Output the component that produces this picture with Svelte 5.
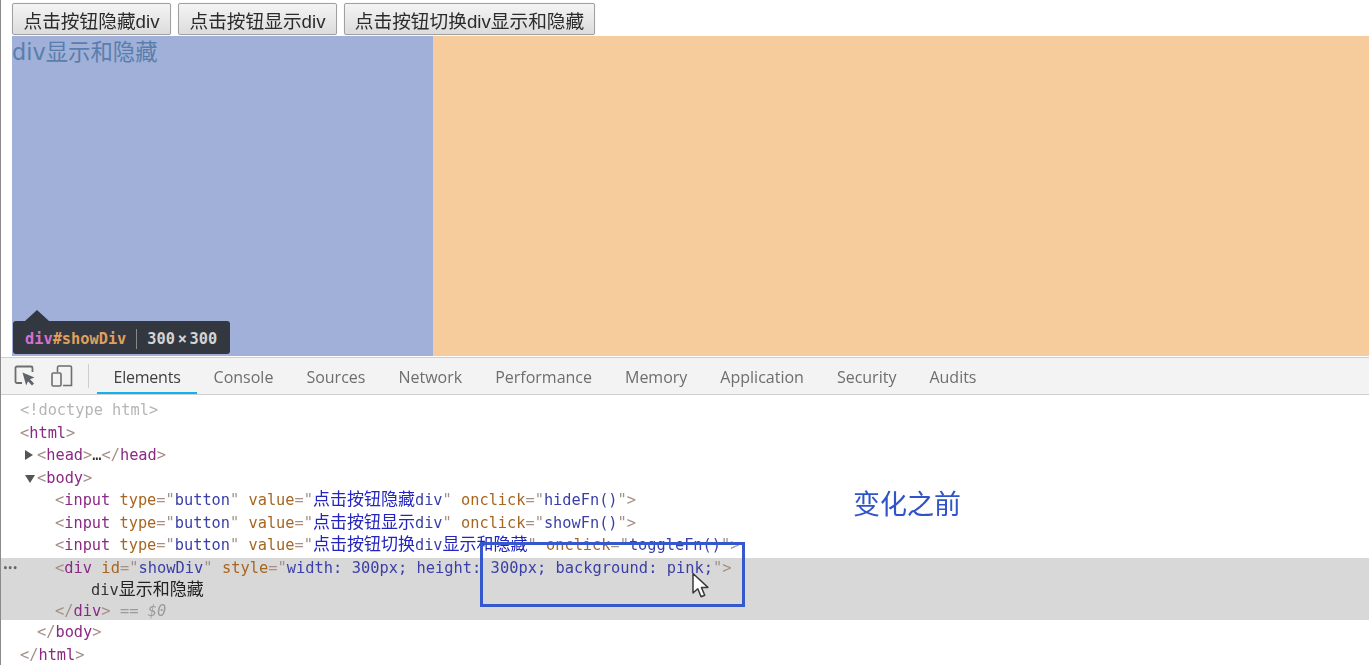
<script>
  const tabs = ['Elements','Console','Sources','Network','Performance','Memory','Application','Security','Audits'];
  const btn = (v, fn) => [
    ['p','<'],['t','input'],['a',' type'],['p','="'],['v','button'],['p','"'],['a',' value'],['p','="'],
    ['c',v[0]],['v',v[1]],['c',v[2]],['p','"'],['a',' onclick'],['p','="'],['v',fn],['p','">']
  ];
  const rows = [
    {i:'i0', seg:[['d','<!doctype html>']]},
    {i:'i0', seg:[['p','<'],['t','html'],['p','>']]},
    {i:'i1', arrow:'right', seg:[['p','<'],['t','head'],['p','>'],['x','…'],['p','</'],['t','head'],['p','>']]},
    {i:'i1', arrow:'down', seg:[['p','<'],['t','body'],['p','>']]},
    {i:'i2', seg:btn(['点击按钮隐藏','div',''],'hideFn()')},
    {i:'i2', seg:btn(['点击按钮显示','div',''],'showFn()')},
    {i:'i2', seg:btn(['点击按钮切换','div','显示和隐藏'],'toggleFn()')},
  ];
  const selected = [
    {i:'i2', dots:true, seg:[['p','<'],['t','div'],['a',' id'],['p','="'],['v','showDiv'],['p','"'],['a',' style'],['p','="'],['v','width: 300px; height: 300px; background: pink;'],['p','">']]},
    {i:'i3', seg:[['x','div'],['k','显示和隐藏']]},
    {i:'i2', seg:[['p','</'],['t','div'],['p','>'],['e',' == $0']]},
  ];
  const tail = [
    {i:'i1', seg:[['p','</'],['t','body'],['p','>']]},
    {i:'i0', seg:[['p','</'],['t','html'],['p','>']]},
  ];
</script>

{#snippet row(r)}
  <div class="row {r.i}">{#if r.dots}<span class="dots">•••</span>{/if}{#if r.arrow}<span class="arrow {r.arrow}"></span>{/if}{#each r.seg as s}<span class={s[0]}>{s[1]}</span>{/each}</div>
{/snippet}

<div class="root">
  <div class="shot">
    <section class="page">
      <div class="buttons">
        <button>点击按钮隐藏div</button>
        <button>点击按钮显示div</button>
        <button>点击按钮切换div显示和隐藏</button>
      </div>
      <div class="stage">
        <div class="box">
          div显示和隐藏
          <div class="tip">
            <span class="tag">div</span><span class="id">#showDiv</span><span class="sep"></span><span class="dim">300 × 300</span>
          </div>
        </div>
        <div class="rest"></div>
      </div>
    </section>

    <section class="tools">
      <svg class="ico first" width="22" height="24" viewBox="0 0 22 24" fill="none">
        <path d="M8 19H3a1.500 1.500 0 0 1-1.500-1.500V4A1.500 1.500 0 0 1 3 2.500h14A1.500 1.500 0 0 1 18.500 4v4" stroke="#6e6e6e" stroke-width="1.800"/>
        <path d="M8.500 8.500l12 5-4.500 1.800 4 4.300-2 2-4-4.300-1.800 4.200z" fill="#5f6368"/>
      </svg>
      <svg class="ico" width="22" height="24" viewBox="0 0 22 24" fill="none" stroke="#6e6e6e" stroke-width="1.600">
        <path d="M6.500 8V3.500a1.500 1.500 0 0 1 1.500-1.500h11a1.500 1.500 0 0 1 1.500 1.500v18H12"/>
        <rect x="1" y="9" width="9" height="13" rx="1.200"/>
      </svg>
      <span class="divider"></span>
      <nav class="tabs">
        {#each tabs as t, n}<span class="tab" class:active={n === 0}>{t}</span>{/each}
      </nav>
    </section>

    <section class="code">
      {#each rows as r}{@render row(r)}{/each}
      <div class="sel">
        {#each selected as r}{@render row(r)}{/each}
      </div>
      {#each tail as r}{@render row(r)}{/each}
    </section>
  </div>

  <div class="note">变化之前</div>
  <div class="frame"></div>
  <svg class="cursor" width="20" height="28" viewBox="0 0 20 28">
    <path d="M2 1.500V21l4.800-4.300 3.300 8 3.600-1.500-3.300-7.800h6.500z" fill="#fff" stroke="#3a3a3a" stroke-width="1.500" stroke-linejoin="round"/>
  </svg>
</div>

<style>
  :global(body) { margin: 0; background: #fff; overflow: hidden; }
  .root { position: relative; width: 1369px; height: 665px; overflow: hidden; background: #fff; }
  .shot { display: flex; flex-direction: column; height: 665px; border-left: 1px solid #8a8a8a; filter: blur(0.6px); box-sizing: border-box; }

  .page { height: 357px; padding-left: 11px; flex: none; box-sizing: border-box; }
  .buttons { display: flex; gap: 7px; height: 36px; padding-top: 3px; box-sizing: border-box; }
  button {
    height: 32px; padding: 0; margin: 0; flex: none;
    font: 18.700px "Liberation Sans", "Noto Sans CJK SC", sans-serif; color: #2b2b2b;
    background: linear-gradient(#f4f4f4, #dcdcdc); border: 1px solid #a0a0a0; border-radius: 2px;
    box-shadow: 0 0 1px #c8c8c8;
    white-space: nowrap;
  }
  .buttons button:first-child { width: 159px; }
  .buttons button:nth-child(2) { width: 159px; }
  .buttons button:nth-child(3) { width: 251px; }
  .stage { display: flex; height: 320px; margin-right: -1px; }
  .box {
    position: relative; width: 421px; background: #a0b0d9; color: #5a7eab;
    font: 22.400px/33px "DejaVu Sans", "Noto Sans CJK SC", sans-serif;
  }
  .rest { flex: 1; background: #f6cc9d; }
  .tip {
    position: absolute; left: 1px; top: 285px; width: 217px; height: 33px;
    display: flex; align-items: center; padding-left: 12px; padding-top: 3px; box-sizing: border-box;
    background: #333740; border-radius: 3px;
    font: 15.300px/30px "DejaVu Sans Mono", monospace; white-space: pre;
  }
  .tip::before {
    content: ""; position: absolute; left: 12px; top: -11px;
    border: 12px solid transparent; border-top: 0; border-bottom: 11px solid #333740;
  }
  .tag { color: #d76fd0; font-weight: bold; }
  .id { color: #e0a05e; font-weight: bold; }
  .sep { width: 1px; height: 20px; background: #888; margin: 0 10px; }
  .dim { color: #d4d4d4; font-weight: bold; word-spacing: -6.500px; }

  .tools {
    height: 38px; flex: none; display: flex; align-items: center; box-sizing: border-box;
    background: #f3f3f3; border-top: 1px solid #d0d0d0; border-bottom: 1px solid #d0d0d0;
  }
  .ico { flex: none; margin-left: 15px; }
  .ico.first { margin-left: 13px; }
  .divider { width: 1px; height: 24px; background: #cfcfcf; margin-left: 15px; }
  .tabs { display: flex; height: 100%; margin-left: 8px; }
  .tab {
    padding: 1px 16.500px 0; height: 36px; box-sizing: border-box;
    font: 16px/36px "Open Sans", sans-serif; color: #6e6e6e; white-space: nowrap;
  }
  .tab.active { color: #3f3f3f; border-bottom: 2px solid #14b0f0; letter-spacing: -0.220px; }

  .code { flex: 1; padding-top: 4px; font: 15.300px/22.500px "DejaVu Sans Mono", monospace; }
  .row { position: relative; height: 22.500px; white-space: pre; }
  .i0 { padding-left: 19px; }
  .i1 { padding-left: 36px; }
  .i2 { padding-left: 54px; }
  .i3 { padding-left: 90px; }
  .sel { background: #d8d8d8; height: 62px; margin-top: 1.500px; margin-bottom: 1px; font-size: 15.400px; }
  .sel .row:first-child { top: -1.500px; }
  .sel .row:nth-child(2) { top: -1.500px; }
  .sel .row:nth-child(3) { top: -3.500px; }
  .p { color: #a68f88; }
  .t { color: #8a2a84; }
  .a { color: #a8651f; }
  .v { color: #3a3fa8; }
  .c { color: #2424c0; font: 17px/0 "Noto Sans CJK SC", sans-serif; }
  .k { color: #222; font: 17px/0 "Noto Sans CJK SC", sans-serif; }
  .d { color: #b5b5b5; }
  .x { color: #333; }
  .e { color: #9a9a9a; font-style: italic; }
  .dots { position: absolute; left: 2px; top: 1.500px; font-size: 8px; color: #666; font-weight: bold; }
  .arrow { position: absolute; left: 24px; top: 6px; width: 0; height: 0; }
  .arrow.right { border-left: 8px solid #555; border-top: 5px solid transparent; border-bottom: 5px solid transparent; }
  .arrow.down { top: 8px; border-top: 8px solid #555; border-left: 5px solid transparent; border-right: 5px solid transparent; }

  .note {
    position: absolute; left: 853px; top: 485px;
    font: 27px/36px "Noto Sans CJK SC", sans-serif; color: #2f54c8;
  }
  .frame {
    position: absolute; left: 480px; top: 542px; width: 265px; height: 65px;
    box-sizing: border-box; border: 3px solid #3558cd;
  }
  .cursor { position: absolute; left: 691px; top: 572px; }
</style>
